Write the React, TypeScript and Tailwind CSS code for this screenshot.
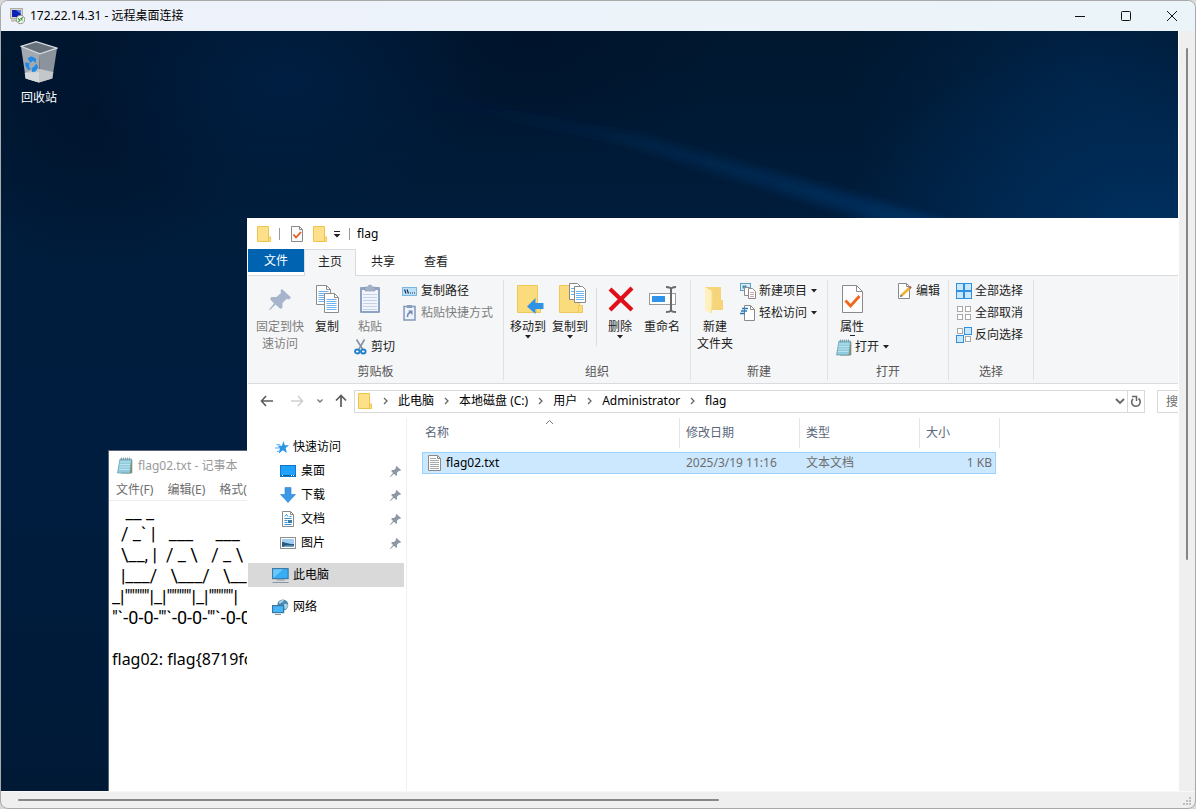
import type { ReactNode } from "react";

const ART = [
  "   __ _",
  "  / _` |   ___     ___",
  "  \\__, |  / _ \\   / _ \\",
  "  |___/   \\___/   \\___/",
  '_|"""""|_|"""""|_|"""""|',
  "\"`-0-0-'\"`-0-0-'\"`-0-0-'",
].join("\n");

/* ---------- icons ---------- */

function FolderIcon() {
  return (
    <svg width="16" height="18" viewBox="0 0 16 18" aria-hidden="true">
      <path d="M1.5 1.5h11v10.5h2v4.5h-13z" fill="#ffe08a" stroke="#ecc64a" />
      <path d="M12.5 12v4" stroke="#ecc64a" />
    </svg>
  );
}

function BigFolder({ children }: { children?: ReactNode }) {
  return (
    <svg width="32" height="32" viewBox="-2 0 32 32" aria-hidden="true">
      <path d="M3.5 2.5h20v20h3v7h-23z" fill="#fbdc7c" stroke="#eec95a" />
      <path d="M22.5 22v7" stroke="#eec95a" />
      {children}
    </svg>
  );
}

function CheckDoc({ size }: { size: "sm" | "lg" }) {
  return size === "sm" ? (
    <svg width="14" height="18" viewBox="0 0 14 18" aria-hidden="true">
      <path d="M1.5 1.5h8l3 3v12h-11z" fill="#fafafa" stroke="#8a8a8a" />
      <path d="M9.500 1.500v3h3" fill="none" stroke="#8a8a8a" />
      <path d="M3.500 9.500l2.500 3 5-5.500" fill="none" stroke="#e8561c" strokeWidth="1.800" />
    </svg>
  ) : (
    <svg width="32" height="32" viewBox="0 0 32 32" aria-hidden="true">
      <path d="M6.500 2.500h14l6 6v21h-20z" fill="#fdfdfd" stroke="#8a8a8a" />
      <path d="M20.500 2.500v6h6" fill="none" stroke="#8a8a8a" />
      <path d="M9.500 17.500l5 5.500 9-10" fill="none" stroke="#f26419" strokeWidth="2.800" />
    </svg>
  );
}

function PinBig() {
  return (
    <svg width="32" height="32" viewBox="0 0 32 32" aria-hidden="true">
      <path
        d="M18 6l9 8.500-2 2-2.500-.5-4 4 0 4.500-2 1.500-5-4.500L6 27l-1-.5 5-6-4-4.500 1.500-2 5 0 4.500-4-.5-2.500z"
        fill="#a7b4cb"
      />
    </svg>
  );
}

function PinSmall() {
  return (
    <svg width="11" height="11" viewBox="0 0 11 11" aria-hidden="true">
      <path d="M6.500 0L11 4l-1 1-1-.3-2 2V9L6 10 4 7.700.500 11 0 10.500 3 7 1.200 5l.8-1h2l2-2-.3-1z" fill="#8c99a5" />
    </svg>
  );
}

function Page({ x, y }: { x: number; y: number }) {
  const lines = [6, 8, 10, 12, 14, 16];
  return (
    <g transform={`translate(${x} ${y})`}>
      <path d="M.500.500h10l4 4v15h-14z" fill="#fff" stroke="#8c8c8c" />
      <path d="M10.500.500v4h4" fill="none" stroke="#8c8c8c" />
      {lines.map((l) => (
        <path key={l} d={`M2.500 ${l + 0.5}h10`} stroke="#6fb2f2" />
      ))}
    </g>
  );
}

function CopyIcon() {
  return (
    <svg width="32" height="32" viewBox="0 0 32 32" aria-hidden="true">
      <Page x={5} y={2} />
      <Page x={13} y={10} />
    </svg>
  );
}

function PasteIcon() {
  return (
    <svg width="32" height="32" viewBox="0 0 32 32" aria-hidden="true">
      <rect x="6" y="4" width="20" height="26" rx="1" fill="#8ea2c4" />
      <rect x="8" y="7" width="16" height="21" fill="#f1f5fb" />
      <path d="M11 4h3a2 2 0 0 1 4 0h3v4H11z" fill="#a4b2c9" stroke="#8998b3" strokeWidth=".6" />
      {[11, 14, 17, 20, 23, 26].map((y) => (
        <path key={y} d={`M9 ${y}.500h14`} stroke="#c4d2e8" />
      ))}
    </svg>
  );
}

function ScissorsIcon() {
  return (
    <svg width="14" height="16" viewBox="0 0 14 16" aria-hidden="true">
      <path d="M2.500.500L8.500 10M10.500.500L5 10" stroke="#8492a3" strokeWidth="1.600" />
      <ellipse cx="3.300" cy="12.500" rx="2.300" ry="2" fill="none" stroke="#1e7fc8" strokeWidth="1.800" />
      <ellipse cx="9.300" cy="12.500" rx="2.300" ry="2" fill="none" stroke="#1e7fc8" strokeWidth="1.800" />
    </svg>
  );
}

function PathIcon() {
  return (
    <svg width="16" height="16" viewBox="0 0 16 16" aria-hidden="true">
      <rect x=".5" y="4.500" width="14" height="8" fill="#bfe1f8" stroke="#7ab6df" />
      <path d="M2.500 6.500l1.500 4M5 6.500l1.500 4M8 10h1M10 10h1M12 10h1" stroke="#16324f" strokeWidth="1.200" />
    </svg>
  );
}

function ShortcutIcon() {
  return (
    <svg width="16" height="16" viewBox="0 0 16 16" aria-hidden="true">
      <rect x="2" y="1.500" width="11" height="13.500" fill="#eef3fa" stroke="#8a9dbd" strokeWidth="1.600" />
      <rect x="5" y="0" width="5" height="3" fill="#8a9dbd" />
      <path d="M5.500 12c0-3 1-4.500 3.500-4.500" fill="none" stroke="#7189b1" strokeWidth="1.600" />
      <path d="M6 5.500h4.500V10z" fill="#7189b1" />
    </svg>
  );
}

function DeleteIcon() {
  return (
    <svg width="32" height="32" viewBox="0 0 32 32" aria-hidden="true">
      <path d="M6 6l22 21M28 5L6 27" stroke="#e0101a" strokeWidth="4.200" />
    </svg>
  );
}

function RenameIcon() {
  return (
    <svg width="32" height="32" viewBox="0 0 32 32" aria-hidden="true">
      <rect x="3.500" y="10.500" width="26" height="11" fill="#fff" stroke="#9a9a9a" />
      <rect x="6" y="13" width="13" height="6" fill="#3093ea" />
      <path d="M20 4c3 0 5 .5 5 2.500v20c0 2-2 2.500-5 2.500M30 4c-3 0-5 .5-5 2.500v20c0 2 2 2.500 5 2.500" fill="none" stroke="#6a6a6a" strokeWidth="2" />
    </svg>
  );
}

function NewFolderIcon() {
  return (
    <svg width="32" height="32" viewBox="0 0 32 32" aria-hidden="true">
      <path d="M6 4h16v13h2v10H12z" fill="#f6d57a" />
      <path d="M6 4l7 4v20l-1 3-6-4z" fill="#fff0bd" />
      <path d="M13 8v15l-1 7" fill="none" stroke="#f7dd90" />
    </svg>
  );
}

function NewItemIcon() {
  return (
    <svg width="16" height="16" viewBox="0 0 16 16" aria-hidden="true">
      <rect x=".5" y=".5" width="10" height="7" fill="#d7edf9" stroke="#5f9dbd" />
      <rect x="2.500" y="2.500" width="4" height="3" fill="#4a8db0" />
      <path d="M4.500 4.500h5v8h-5z" fill="#fff" stroke="#8a8a8a" />
      <path d="M8.500 5.500h4l3 3v7h-7z" fill="#fff" stroke="#8a8a8a" />
      <path d="M10 9.500h4M10 11.500h4M10 13.500h4" stroke="#d6a5ad" />
    </svg>
  );
}

function EasyAccessIcon() {
  return (
    <svg width="16" height="16" viewBox="0 0 16 16" aria-hidden="true">
      <path d="M4.500.500h6l4 4v11h-10z" fill="#fff" stroke="#8a8a8a" />
      <path d="M10.500.500v4h4" fill="none" stroke="#8a8a8a" />
      <path d="M2 3.500h6M1 6h6M0 8.500h5" stroke="#2478bd" strokeWidth="1.300" />
    </svg>
  );
}

function EditIcon() {
  return (
    <svg width="16" height="16" viewBox="0 0 16 16" aria-hidden="true">
      <path d="M1.500.500h8l3 3v12h-11z" fill="#fff" stroke="#8a8a8a" />
      <path d="M9.500.500v3h3" fill="none" stroke="#8a8a8a" />
      <path d="M4.500 12.500L13 4.500" stroke="#f0b432" strokeWidth="2.600" />
      <path d="M12.300 5.200l1.700-1.600" stroke="#b06a6a" strokeWidth="2.600" />
      <path d="M3 14l.7-2.500 1.800 1.700z" fill="#555" />
    </svg>
  );
}

function NotepadIcon() {
  return (
    <svg width="16" height="17" viewBox="0 0 16 17" aria-hidden="true">
      <path d="M14 2.500l1.300.5v13l-1.300.5H4z" fill="#8f8a6d" />
      <path d="M3 2h11.500l-1.500 14H.500z" fill="#8fcbdc" stroke="#5d9bad" strokeWidth=".7" />
      <path d="M3 5h10.500M2.700 7.500h10.500M2.300 10h10.500M2 12.500h10.500" stroke="#bfe6f0" strokeWidth=".9" />
      <path d="M4.500.500v3M6.500.500v3M8.500.500v3M10.500.500v3M12.500.500v3" stroke="#78939b" strokeWidth=".8" />
    </svg>
  );
}

function SelectIcon({ filled }: { filled: [boolean, boolean, boolean, boolean] }) {
  const cells = [
    [0, 0],
    [8, 0],
    [0, 8],
    [8, 8],
  ];
  return (
    <svg width="16" height="16" viewBox="0 0 16 16" aria-hidden="true">
      {cells.map(([x, y], i) =>
        filled[i] ? (
          <rect key={i} x={x + 0.5} y={y + 0.5} width="7" height="7" fill="#c9e8ff" stroke="#2f8fe0" />
        ) : (
          <rect key={i} x={x + 1.5} y={y + 1.5} width="5" height="5" fill="#fff" stroke="#a8a8a8" />
        ),
      )}
    </svg>
  );
}

function StarIcon() {
  return (
    <svg width="14" height="13" viewBox="0 0 15 14" aria-hidden="true">
      <path d="M9 0l1.500 4.500H15l-3.600 3 1.300 5.500L8.500 10 4 13.500l1.300-5.300L3 5h4.500z" fill="#2b95e6" />
      <path d="M1.500 4h4M0 7.500h5M2 11h3" stroke="#4ba9ee" strokeWidth="1.100" />
    </svg>
  );
}

function DesktopIcon() {
  return (
    <svg width="16" height="16" viewBox="0 0 16 16" aria-hidden="true">
      <rect x=".5" y="2.500" width="15" height="11" fill="#1ea2fb" stroke="#0f78cd" />
      <path d="M1 12.500h14" stroke="#0a62ae" />
      <path d="M2 12.500h1M11 12.500h1M13 12.500h1" stroke="#fff" />
    </svg>
  );
}

function DownloadIcon() {
  return (
    <svg width="16" height="16" viewBox="0 0 16 16" aria-hidden="true">
      <path d="M5 .500h6v7h4.500L8 15.500.500 7.500H5z" fill="#3b97e8" stroke="#2a7fce" strokeWidth=".6" />
    </svg>
  );
}

function DocumentIcon() {
  return (
    <svg width="16" height="16" viewBox="0 0 16 16" aria-hidden="true">
      <path d="M2.500.500h8l3 3v12h-11z" fill="#fff" stroke="#8a8a8a" />
      <path d="M10.500.500v3h3" fill="none" stroke="#8a8a8a" />
      <path d="M5 5.500l1.500-2 1.500 2M4.500 7.500h7M4.500 9.500h3M4.500 11.500h3M4.500 13.500h7M9.500 5.500h2" fill="none" stroke="#3491d4" />
      <rect x="8" y="9" width="4" height="3" fill="#3a7ca5" />
    </svg>
  );
}

function PictureIcon() {
  return (
    <svg width="16" height="16" viewBox="0 0 16 16" aria-hidden="true">
      <rect x=".5" y="2.500" width="15" height="11" fill="#fff" stroke="#8f8f8f" />
      <rect x="2" y="4" width="12" height="8" fill="#9fd0f3" />
      <path d="M2 7c3 0 5 2 12 2v3H2z" fill="#2b5b7a" />
      <path d="M6 10.500h8V12H2z" fill="#6fa9cf" />
    </svg>
  );
}

function ThisPcIcon() {
  return (
    <svg width="17" height="16" viewBox="0 0 17 16" aria-hidden="true">
      <rect x=".6" y="1.600" width="15.500" height="10" fill="#35aef5" stroke="#3c7ba6" strokeWidth="1.200" />
      <path d="M1.200 11V2.200h10z" fill="#6bc6fa" />
      <path d="M4.500 13h8M.500 15.500h16" stroke="#8597a5" />
    </svg>
  );
}

function NetworkIcon() {
  return (
    <svg width="17" height="17" viewBox="0 0 17 17" aria-hidden="true">
      <circle cx="10.800" cy="6" r="5.500" fill="#4b87ad" />
      <path d="M6.500 4c1-2.500 4-3.500 5.500-2.500-1 1.500-2 2-3 2.500s-1.500 1-2.500 0zM12 5c1.500-.5 3 0 4 1-.3 2-1.500 4-3 4.500-1-1.500-2-3.500-1-5.500z" fill="#a9d3e6" />
      <rect x=".6" y="6.600" width="11" height="7" fill="#45b6f7" stroke="#3878a3" strokeWidth="1.200" />
      <path d="M3 15.500h6" stroke="#8597a5" />
    </svg>
  );
}

function TextFileIcon() {
  return (
    <svg width="14" height="16" viewBox="0 0 14 16" aria-hidden="true">
      <path d="M.500.500h9l3 3v12h-12z" fill="#fdfdfd" stroke="#8a8a8a" />
      <path d="M9.500.500v3h3" fill="none" stroke="#8a8a8a" />
      <path d="M2 3.500h6M2 5.500h9M2 7.500h9M2 9.500h9M2 11.500h9M2 13.500h9" stroke="#a8a8a8" />
    </svg>
  );
}

function RemoteIcon() {
  return (
    <svg width="16" height="17" viewBox="0 0 16 17" aria-hidden="true">
      <rect x="1.500" y=".5" width="12" height="10" fill="#d9d6cc" stroke="#b0aca2" />
      <rect x="3" y="2" width="9" height="7" fill="#0b23b4" />
      <path d="M7 2h5v4z" fill="#5a80e8" />
      <path d="M2 12.500h6" stroke="#b9b6ad" strokeWidth="2" />
      <circle cx="11.500" cy="11.500" r="4.200" fill="#f3f6ef" stroke="#8f948c" />
      <path d="M9 10.500l2 1.500-1.500 2M14 9.500l-2 1 1.500 2" fill="none" stroke="#2c9a2e" strokeWidth="1.200" />
    </svg>
  );
}

function RecycleBin() {
  return (
    <svg width="38" height="43" viewBox="0 0 40 44" aria-hidden="true">
      <path d="M1 6l20 7-1 31-14-4z" fill="#a2a9b1" />
      <path d="M39 8l-18 5-1 31 14-4z" fill="#8b939c" />
      <path d="M1 6L17 1l22 7-18 6z" fill="#66707b" stroke="#d5dade" strokeWidth="1.300" />
      <path d="M5 34l8-3 8-1 14 3-1 7-14 4-14-4z" fill="#c3c7ca" />
      <path d="M5 34l15-1v11l-14-4z" fill="#d6d9da" />
      <path d="M8 18.500l4-2 5 2.500-.5 4.500-3-2.500-2.500 2.500zM5.500 23l4.500.5-.5 4 2 2.500-3 1-3-4.500zM12.500 29l2.500-2 2.500-3 1.500 4-2.500 4.500-4 .5z" fill="#1f8ae6" />
    </svg>
  );
}

function Chevron() {
  return (
    <svg className="mx-[9px]" width="7" height="8" viewBox="0 0 7 8" aria-hidden="true">
      <path d="M2 1l3 3-3 3" fill="none" stroke="#666" strokeWidth="1.300" />
    </svg>
  );
}

function Caret() {
  return (
    <svg width="6" height="4" viewBox="0 0 6 4" aria-hidden="true">
      <path d="M0 0h6L3 3.500z" fill="#222" />
    </svg>
  );
}

/* Soft diagonal light ray of the desktop wallpaper. */
function Wallpaper() {
  return (
    <svg
      className="absolute inset-0 h-full w-full"
      viewBox="0 0 1177 760"
      preserveAspectRatio="none"
      aria-hidden="true"
    >
      <defs>
        <linearGradient id="ray" x1="0" y1="0" x2="1" y2="0">
          <stop offset="0" stopColor="#003a78" stopOpacity="0" />
          <stop offset="1" stopColor="#004486" stopOpacity="0.5" />
        </linearGradient>
        <filter id="soft" x="-10%" y="-20%" width="120%" height="140%">
          <feGaussianBlur stdDeviation="4" />
        </filter>
      </defs>
      <path d="M340 50L640 105 1000 205 890 195 620 112z" fill="url(#ray)" filter="url(#soft)" />
    </svg>
  );
}

/* ---------- ribbon parts ---------- */

function BigButton({
  icon,
  label,
  muted,
  caret,
  width = "w-[42px]",
}: {
  icon: ReactNode;
  label: string[];
  muted?: boolean;
  caret?: boolean;
  width?: string;
}) {
  return (
    <button type="button" className={`flex shrink-0 flex-col items-center leading-[17px] ${width} ${muted ? "text-[#7d7d7d]" : "text-[#222]"}`}>
      {icon}
      <span className="mt-[3px] whitespace-nowrap">
        {label.map((l) => (
          <span key={l} className="block">
            {l}
          </span>
        ))}
      </span>
      {caret && <Caret />}
    </button>
  );
}

function SmallButton({ icon, label, muted, caret }: { icon: ReactNode; label: string; muted?: boolean; caret?: boolean }) {
  return (
    <button type="button" className={`flex h-[22px] items-center gap-[3px] whitespace-nowrap ${muted ? "text-[#7d7d7d]" : "text-[#222]"}`}>
      {icon}
      <span>{label}</span>
      {caret && (
        <span className="ml-px">
          <Caret />
        </span>
      )}
    </button>
  );
}

function Group({ title, width, children }: { title: string; width: string; children: ReactNode }) {
  return (
    <section className={`flex shrink-0 flex-col pt-1 ${width}`} aria-label={title}>
      <div className="flex h-[100px] flex-col border-r border-[#e0e1e3]">
        <div className="flex flex-1 items-start pt-[3px]">{children}</div>
        <h2 className="text-center leading-4 text-[#555]">{title}</h2>
      </div>
    </section>
  );
}

function NavItem({ icon, label, pinned }: { icon: ReactNode; label: string; pinned?: boolean }) {
  return (
    <li>
      <a href="#" className={`flex h-6 items-center pr-[3px] ${pinned ? "gap-[5px] pl-8" : "gap-1 pl-6"}`}>
        {icon}
        <span className="flex-1">{label}</span>
        {pinned && <PinSmall />}
      </a>
    </li>
  );
}

function Explorer() {
  return (
    <section
      aria-label="flag"
      className="absolute top-[187px] -right-[200px] bottom-0 left-[246px] flex flex-col bg-white pl-px text-xs text-black"
    >
      <header className="flex h-[31px] shrink-0 items-center pl-2">
        <FolderIcon />
        <span className="ml-[7px] h-3 w-px bg-[#999]" />
        <button type="button" aria-label="属性" className="ml-[10px]">
          <CheckDoc size="sm" />
        </button>
        <button type="button" aria-label="新建文件夹" className="ml-2">
          <FolderIcon />
        </button>
        <button type="button" aria-label="自定义快速访问工具栏" className="ml-[5px]">
          <svg width="8" height="8" viewBox="0 0 8 8" aria-hidden="true">
            <path d="M1 1.500h6" stroke="#222" />
            <path d="M.500 4h7L4 7.500z" fill="#222" />
          </svg>
        </button>
        <span className="ml-2 h-3 w-px bg-[#999]" />
        <h1 className="ml-[7px]">flag</h1>
      </header>

      <nav className="flex h-[27px] shrink-0 border-b border-[#dadbdc] text-[#222]">
        <button type="button" className="h-[23px] w-14 bg-[#0063b1] pt-px text-white">
          文件
        </button>
        <button type="button" className="-mb-px w-[52px] border border-b-0 border-[#dadbdc] bg-[#f5f6f7] pb-[2px]">
          主页
        </button>
        <button type="button" className="w-[54px]">
          共享
        </button>
        <button type="button" className="w-[52px]">
          查看
        </button>
      </nav>

      <div className="flex h-[108px] shrink-0 border-b border-[#dadbdc] bg-[#f5f6f7]">
        <Group title="剪贴板" width="w-64">
          <BigButton icon={<PinBig />} label={["固定到快", "速访问"]} muted width="w-16" />
          <BigButton icon={<CopyIcon />} label={["复制"]} width="w-[30px]" />
          <div className="ml-1 flex w-[53px] flex-col gap-px">
            <BigButton icon={<PasteIcon />} label={["粘贴"]} muted width="w-12" />
            <div className="pl-2">
              <SmallButton icon={<ScissorsIcon />} label="剪切" />
            </div>
          </div>
          <div className="-mt-[3px] ml-[3px]">
            <SmallButton icon={<PathIcon />} label="复制路径" />
            <SmallButton icon={<ShortcutIcon />} label="粘贴快捷方式" muted />
          </div>
        </Group>
        <Group title="组织" width="w-[187px]">
          <div className="flex pl-[3px]">
            <BigButton
              icon={
                <BigFolder>
                  <path d="M29.500 20h-8v-5l-8.500 8.500 8.500 7.500v-5h8z" fill="#2e93e6" />
                </BigFolder>
              }
              label={["移动到"]}
              caret
            />
            <BigButton
              icon={
                <BigFolder>
                  <g transform="translate(13 0)">
                    <path d="M.500.500h8l3 3v13H.500z" fill="#fff" stroke="#888" />
                    <path d="M2 5.500h7M2 8.500h7M2 11.500h7" stroke="#6fb2f2" />
                    <path d="M5.500 3.500h8l3 3v13h-11z" fill="#fff" stroke="#888" />
                    <path d="M7 8.500h8M7 10.500h8M7 12.500h8M7 14.500h8M7 16.500h8" stroke="#6fb2f2" />
                  </g>
                </BigFolder>
              }
              label={["复制到"]}
              caret
            />
            <span className="mt-[5px] ml-[5px] h-[58px] w-px bg-[#dcdde0]" />
            <BigButton icon={<DeleteIcon />} label={["删除"]} caret width="w-[46px]" />
            <BigButton icon={<RenameIcon />} label={["重命名"]} width="w-[38px]" />
          </div>
        </Group>
        <Group title="新建" width="w-[137px]">
          <BigButton icon={<NewFolderIcon />} label={["新建", "文件夹"]} width="w-12" />
          <div className="-mt-[3px] pl-px">
            <SmallButton icon={<NewItemIcon />} label="新建项目" caret />
            <SmallButton icon={<EasyAccessIcon />} label="轻松访问" caret />
          </div>
        </Group>
        <Group title="打开" width="w-[121px]">
          <div className="flex w-[69px] flex-col pl-2">
            <div className="flex w-8 flex-col items-center">
              <BigButton icon={<CheckDoc size="lg" />} label={["属性"]} width="w-8" />
              <span className="h-px w-[5px] bg-[#222]" />
            </div>
            <SmallButton icon={<NotepadIcon />} label="打开" caret />
          </div>
          <div className="-mt-[3px]">
            <SmallButton icon={<EditIcon />} label="编辑" />
          </div>
        </Group>
        <Group title="选择" width="w-[85px]">
          <div className="-mt-[3px] pl-[7px]">
            <SmallButton icon={<SelectIcon filled={[true, true, true, true]} />} label="全部选择" />
            <SmallButton icon={<SelectIcon filled={[false, false, false, false]} />} label="全部取消" />
            <SmallButton icon={<SelectIcon filled={[false, true, true, false]} />} label="反向选择" />
          </div>
        </Group>
      </div>

      <div className="flex h-[34px] shrink-0 items-center">
        <button type="button" aria-label="后退" className="ml-3">
          <svg width="14" height="12" viewBox="0 0 14 12" aria-hidden="true">
            <path d="M13 6H1.500M6 1L1.500 6 6 11" fill="none" stroke="#5c5c5c" strokeWidth="1.600" />
          </svg>
        </button>
        <button type="button" aria-label="前进" className="ml-4">
          <svg width="14" height="12" viewBox="0 0 14 12" aria-hidden="true">
            <path d="M1 6h11.500M8 1l4.500 5L8 11" fill="none" stroke="#d0d0d0" strokeWidth="1.600" />
          </svg>
        </button>
        <button type="button" aria-label="最近浏览的位置" className="ml-3">
          <svg width="8" height="6" viewBox="0 0 8 6" aria-hidden="true">
            <path d="M1.500 1.500L4 4l2.500-2.500" fill="none" stroke="#777" strokeWidth="1.400" />
          </svg>
        </button>
        <button type="button" aria-label="上移" className="ml-[11px]">
          <svg width="12" height="14" viewBox="0 0 12 14" aria-hidden="true">
            <path d="M6 13V1.500M1 6.500l5-5 5 5" fill="none" stroke="#5c5c5c" strokeWidth="1.700" />
          </svg>
        </button>
        <div className="ml-[7px] flex h-[23px] flex-1 items-center border border-[#d9d9d9] pl-[2px]">
          <FolderIcon />
          <Chevron />
          <a href="#">此电脑</a>
          <Chevron />
          <a href="#">本地磁盘 (C:)</a>
          <Chevron />
          <a href="#">用户</a>
          <Chevron />
          <a href="#">Administrator</a>
          <Chevron />
          <a href="#">flag</a>
          <button type="button" aria-label="上一个位置" className="mr-[2px] ml-auto">
            <svg width="10" height="8" viewBox="0 0 10 8" aria-hidden="true">
              <path d="M1 2l4 4 4-4" fill="none" stroke="#666" strokeWidth="1.800" />
            </svg>
          </button>
          <button type="button" aria-label="刷新" className="flex h-full w-[17px] items-center justify-center border-l border-[#d9d9d9]">
            <svg width="12" height="13" viewBox="0 0 12 13" aria-hidden="true">
              <path d="M8.500 3.500A4.300 4.300 0 1 1 3 3.800" fill="none" stroke="#666" strokeWidth="1.600" />
              <path d="M2 1.500h4.500V6" fill="none" stroke="#666" strokeWidth="1.500" />
            </svg>
          </button>
        </div>
        <input
          type="search"
          aria-label="搜索"
          placeholder="搜索"
          className="ml-3 h-[23px] w-[200px] border border-[#d9d9d9] pl-2 outline-none placeholder:text-[#6d6d6d]"
        />
        <span className="w-[21px]" />
      </div>

      <div className="flex min-h-0 flex-1">
        <nav aria-label="导航窗格" className="w-[159px] shrink-0 border-r border-[#f0f0f0] pt-[17px] pr-[2px]">
          <ul>
            <NavItem icon={<span className="ml-[3px]"><StarIcon /></span>} label="快速访问" />
            <NavItem icon={<DesktopIcon />} label="桌面" pinned />
            <NavItem icon={<DownloadIcon />} label="下载" pinned />
            <NavItem icon={<DocumentIcon />} label="文档" pinned />
            <NavItem icon={<PictureIcon />} label="图片" pinned />
          </ul>
          <ul className="my-2 bg-[#d9d9d9]">
            <NavItem icon={<ThisPcIcon />} label="此电脑" />
          </ul>
          <ul>
            <NavItem icon={<NetworkIcon />} label="网络" />
          </ul>
        </nav>
        <main className="relative flex-1 pl-[15px]">
          <svg className="absolute top-px left-[138px]" width="9" height="6" viewBox="0 0 9 6" aria-hidden="true">
            <path d="M1 5l3.500-3.500L8 5" fill="none" stroke="#777" />
          </svg>
          <table className="w-[578px] table-fixed border-separate border-spacing-0">
            <colgroup>
              <col className="w-[258px]" />
              <col className="w-[120px]" />
              <col className="w-[120px]" />
              <col className="w-20" />
            </colgroup>
            <thead>
              <tr className="h-[30px] text-left text-[#5a6679]">
                <th className="border-r border-[#e5e5e5] pl-[3px] font-normal">名称</th>
                <th className="border-r border-[#e5e5e5] pl-[6px] font-normal">修改日期</th>
                <th className="border-r border-[#e5e5e5] pl-[6px] font-normal">类型</th>
                <th className="border-r border-[#e5e5e5] pl-[6px] font-normal">大小</th>
              </tr>
            </thead>
          </table>
          <table className="mt-1 w-[574px] table-fixed border-separate border-spacing-0 border border-[#99d1ff] bg-[#cce8ff]">
            <colgroup>
              <col className="w-[257px]" />
              <col className="w-[120px]" />
              <col className="w-[120px]" />
              <col className="w-[75px]" />
            </colgroup>
            <tbody>
              <tr className="h-5 text-[#6d6d6d]">
                <td className="pl-[5px] text-black">
                  <span className="flex items-center gap-1">
                    <TextFileIcon />
                    flag02.txt
                  </span>
                </td>
                <td className="pl-[6px]">2025/3/19 11:16</td>
                <td className="pl-[6px]">文本文档</td>
                <td className="pr-[3px] text-right">1 KB</td>
              </tr>
            </tbody>
          </table>
        </main>
      </div>
    </section>
  );
}

function Notepad() {
  return (
    <section
      aria-label="记事本"
      className="absolute top-[419px] bottom-0 left-[107px] flex w-[400px] flex-col border-t border-l border-[#5b6470] bg-white text-xs"
    >
      <header className="flex h-[29px] shrink-0 items-center gap-[5px] pl-2 text-[#999]">
        <NotepadIcon />
        <h2>flag02.txt - 记事本</h2>
      </header>
      <nav className="flex h-[21px] shrink-0 items-center gap-[14px] border-b border-[#eee] pl-[7px] text-[#6d6d6d]">
        <button type="button">文件(F)</button>
        <button type="button">编辑(E)</button>
        <button type="button">格式(O)</button>
      </nav>
      <div className="pt-px pl-[3px] leading-[21px] text-black">
        <pre className="font-[Roboto,sans-serif] text-lg leading-[21px]">{ART}</pre>
        <p className="mt-[21px] text-base leading-[21px] whitespace-nowrap">flag02: flag&#123;8719fc</p>
      </div>
    </section>
  );
}

export default function App() {
  return (
    <div className="h-screen bg-[#d8d8d8] font-['Noto_Sans','Noto_Sans_CJK_SC',sans-serif]">
      <div className="flex h-full flex-col overflow-hidden rounded-lg border border-[#a9a9a9] bg-[#efefef]">
        <header className="flex h-[30px] shrink-0 items-center bg-linear-to-r from-[#eef2fb] to-[#ebf4f8] pl-2 text-xs text-black">
          <RemoteIcon />
          <h1 className="ml-[5px] flex-1">172.22.14.31 - 远程桌面连接</h1>
          <button type="button" aria-label="最小化" className="flex h-full w-[46px] items-center justify-center">
            <svg width="10" height="10" viewBox="0 0 10 10" aria-hidden="true">
              <path d="M0 5.500h10" stroke="#111" />
            </svg>
          </button>
          <button type="button" aria-label="最大化" className="flex h-full w-[46px] items-center justify-center">
            <svg width="10" height="10" viewBox="0 0 10 10" aria-hidden="true">
              <rect x=".5" y=".5" width="9" height="9" rx="1" fill="none" stroke="#111" />
            </svg>
          </button>
          <button type="button" aria-label="关闭" className="flex h-full w-[46px] items-center justify-center">
            <svg width="10" height="10" viewBox="0 0 10 10" aria-hidden="true">
              <path d="M0 0l10 10M10 0L0 10" stroke="#111" />
            </svg>
          </button>
        </header>

        <div className="flex min-h-0 flex-1">
          <div className="relative min-w-0 flex-1 overflow-hidden bg-[#001a3a] bg-[radial-gradient(ellipse_300px_200px_at_97%_200px,#003060,transparent),radial-gradient(ellipse_240px_200px_at_92%_50px,#002246,transparent),radial-gradient(ellipse_200px_140px_at_24%_50px,#001e42,transparent),radial-gradient(ellipse_200px_120px_at_45%_10px,#00132c,transparent),radial-gradient(ellipse_160px_160px_at_8%_80px,#00142e,transparent),linear-gradient(to_bottom,#00172f,#001d3c_200px,#001d40_420px,#001a36)]">
            <Wallpaper />
            <button type="button" className="absolute top-[9px] left-[2px] flex w-[72px] flex-col items-center text-xs text-white">
              <RecycleBin />
              <span className="mt-[7px]">回收站</span>
            </button>
            <Notepad />
            <Explorer />
          </div>
          <div className="w-[17px] shrink-0 border-l border-white pt-[17px] pl-[7px]">
            <div className="h-[512px] w-[2px] rounded bg-[#868686]" />
          </div>
        </div>

        <footer className="flex h-[17px] shrink-0 items-end justify-between border-t border-[#f8f8f8] pl-[17px]">
          <div className="mb-[7px] h-[2px] w-[701px] rounded bg-[#868686]" />
          <svg width="14" height="13" viewBox="0 0 14 13" aria-hidden="true">
            <path d="M8 2h2v2H8zM5 5h2v2H5zM8 5h2v2H8zM2 8h2v2H2zM5 8h2v2H5zM8 8h2v2H8z" fill="#bfbfbf" />
          </svg>
        </footer>
      </div>
    </div>
  );
}
